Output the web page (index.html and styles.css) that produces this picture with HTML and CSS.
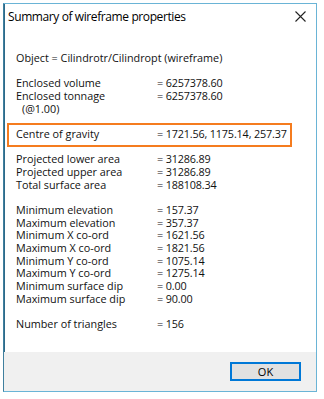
FILE: index.html
```html
<!DOCTYPE html>
<html>
<head>
<meta charset="utf-8">
<link rel="stylesheet" href="styles.css">
</head>
<body>
<div class="window">
  <div class="titlebar">
    <span class="title">Summary of wireframe properties</span>
    <svg class="close" width="11" height="11" viewBox="0 0 11 11"><path d="M0.5 0.5L10.5 10.5M10.5 0.5L0.5 10.5" stroke="#222" stroke-width="1.1" fill="none"/></svg>
  </div>
  <div class="content">
    <div class="line">Object = Cilindrotr/Cilindropt (wireframe)</div>
    <div class="blank"></div>
    <div class="row"><span class="lbl">Enclosed volume</span><span class="val">= 6257378.60</span></div>
    <div class="row"><span class="lbl">Enclosed tonnage</span><span class="val">= 6257378.60</span></div>
    <div class="line indent">(@1.00)</div>
    <div class="blank"></div>
    <div class="row highlight"><span class="lbl">Centre of gravity</span><span class="val">= 1721.56, 1175.14, 257.37</span></div>
    <div class="blank"></div>
    <div class="row"><span class="lbl">Projected lower area</span><span class="val">= 31286.89</span></div>
    <div class="row"><span class="lbl">Projected upper area</span><span class="val">= 31286.89</span></div>
    <div class="row"><span class="lbl">Total surface area</span><span class="val">= 188108.34</span></div>
    <div class="blank"></div>
    <div class="row"><span class="lbl">Minimum elevation</span><span class="val">= 157.37</span></div>
    <div class="row"><span class="lbl">Maximum elevation</span><span class="val">= 357.37</span></div>
    <div class="row"><span class="lbl">Minimum X co-ord</span><span class="val">= 1621.56</span></div>
    <div class="row"><span class="lbl">Maximum X co-ord</span><span class="val">= 1821.56</span></div>
    <div class="row"><span class="lbl">Minimum Y co-ord</span><span class="val">= 1075.14</span></div>
    <div class="row"><span class="lbl">Maximum Y co-ord</span><span class="val">= 1275.14</span></div>
    <div class="row"><span class="lbl">Minimum surface dip</span><span class="val">= 0.00</span></div>
    <div class="row"><span class="lbl">Maximum surface dip</span><span class="val">= 90.00</span></div>
    <div class="blank"></div>
    <div class="row"><span class="lbl">Number of triangles</span><span class="val">= 156</span></div>
  </div>
  <div class="footer">
    <button class="ok">OK</button>
  </div>
</div>
</body>
</html>
```
FILE: styles.css
```css
html, body {
  margin: 0;
  padding: 0;
  background: #ffffff;
}
body {
  padding: 3px 0 0 3px;
  font-family: "Open Sans", "Noto Sans", sans-serif;
  color: #111;
}
.window {
  width: 312px;
  height: 387px;
  border: 1px solid #6ab4d6;
  border-left: 1px solid #3f7f9e;
  box-shadow: inset 1px 0 0 #2d6a8a;
  background: #fff;
  display: flex;
  flex-direction: column;
}
.titlebar {
  height: 26px;
  display: flex;
  align-items: center;
  justify-content: space-between;
  padding: 0 10px 0 4px;
  box-sizing: border-box;
  margin-top: -1px;
}
.title {
  font-size: 12px;
  letter-spacing: -0.4px;
  color: #000;
}
.close {
  display: block;
}
.content {
  padding: 23px 0 0 12px;
  font-size: 10.8px;
  line-height: 12.68px;
  flex: 1;
}
.line, .row {
  height: 12.68px;
  white-space: nowrap;
}
.blank {
  height: 12.68px;
}
.row {
  display: flex;
}
.lbl {
  width: 141px;
  flex: none;
}
.val {
  letter-spacing: -0.15px;
}
.indent {
  padding-left: 6px;
}
.highlight {
  margin: -5px 24px -6.4px -9px;
  height: auto;
  border: 2px solid #f57c1f;
  padding: 3px 0 4.4px 7px;
}
.footer {
  height: 39px;
  background: #f0f0f0;
  display: flex;
  justify-content: flex-end;
  align-items: flex-start;
  padding: 10px 15px 0 0;
  box-sizing: border-box;
}
.ok {
  width: 71px;
  height: 19px;
  margin: 0;
  padding: 0;
  border: 1px solid #0078d7;
  box-shadow: inset 0 0 0 1px #0078d7;
  background: #e1e1e1;
  font-family: "Open Sans", "Noto Sans", sans-serif;
  font-size: 11px;
  color: #000;
}
```
